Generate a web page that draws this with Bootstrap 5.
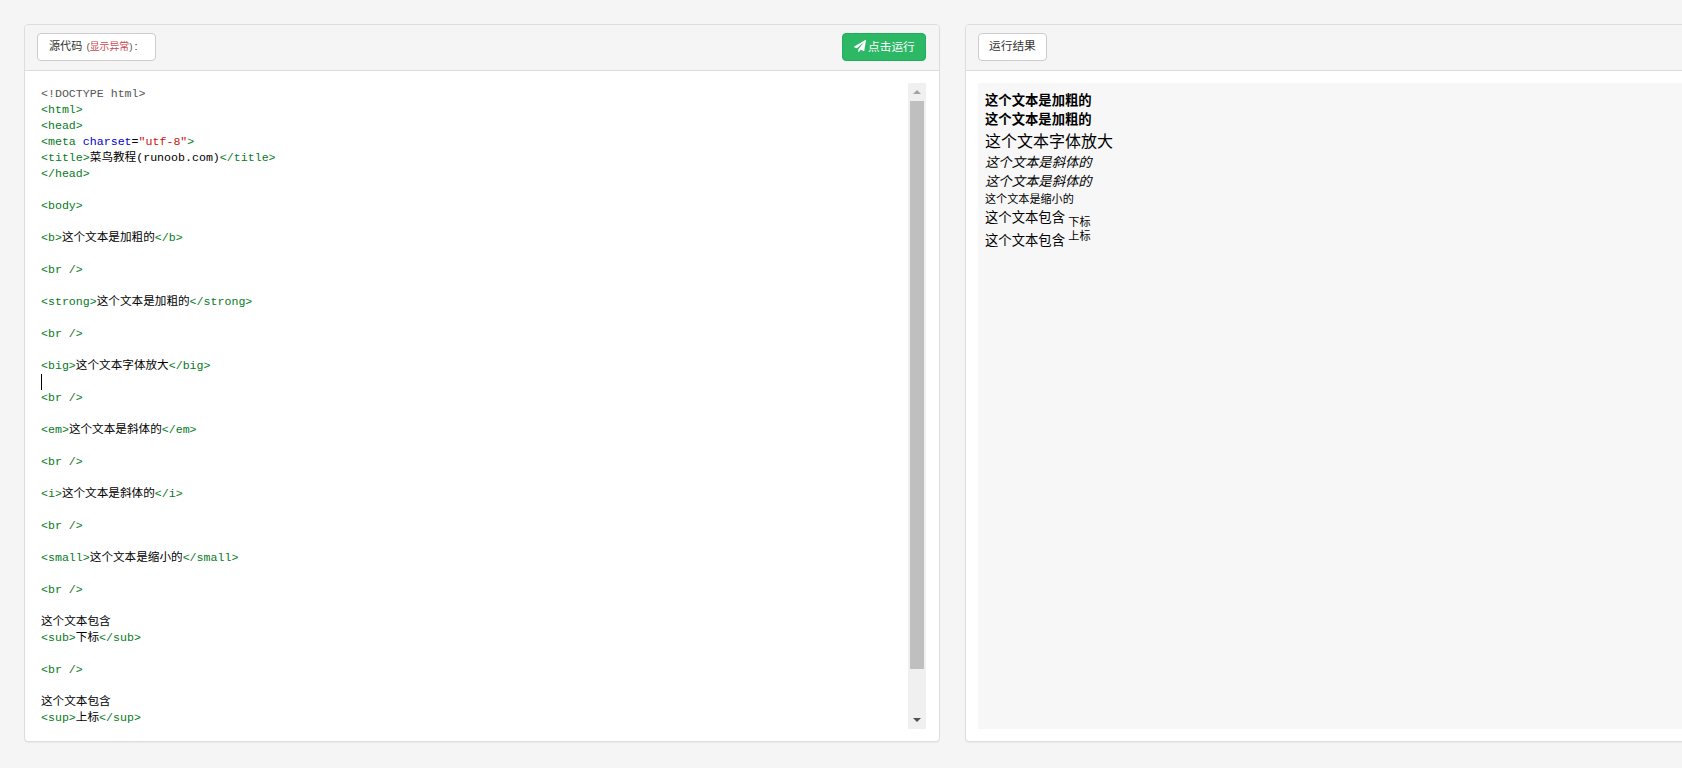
<!DOCTYPE html>
<html lang="zh-CN">
<head>
<meta charset="utf-8">
<title>菜鸟教程在线编辑器</title>
<link href="https://cdn.jsdelivr.net/npm/bootstrap@5.3.0/dist/css/bootstrap.min.css" rel="stylesheet">
<style>
html, body { height: 100%; overflow: hidden; }
body { background: #f5f5f5; font-family: "Liberation Sans", "Noto Sans CJK SC", sans-serif; font-size: 14px; color: #333; }
.pane-row { display: flex; gap: 25px; padding: 24px 0 0 24px; width: 1900px; }
.pane { flex: 0 0 916px; height: 718px; border: 1px solid #ddd; border-radius: 4px; box-shadow: 0 1px 1px rgba(0,0,0,.05); background: #fff; }
.pane-head { background: #f5f5f5; border-bottom: 1px solid #ddd; height: 46px; padding: 8px 13px 0 12px; border-radius: 3px 3px 0 0; }
.tag-btn { background: #fff; border: 1px solid #ccc; border-radius: 4px; font-size: 11.7px; line-height: 18px; padding: 3px 10px; color: #333; height: 28px; white-space: nowrap; }
.tag-wide { width: 119px; font-size: 11.1px; padding-left: 11px; }
.tag-btn .warn { color: #c9484f; font-size: 9.9px; }
.tag-btn .note { font-size: 9.9px; color: #555; margin-left: 1px; }
.tag-btn .colon { margin-left: 2px; }
.run-btn { background: #2db865; border: 1px solid #1fae5b; border-radius: 4px; color: #fff; font-size: 11.7px; line-height: 18px; padding: 3px 0 4px 11px; height: 28px; width: 84px; white-space: nowrap; text-align: left; }
.run-btn svg { width: 12px; height: 12px; fill: #fff; vertical-align: -1px; margin-right: 2px; }
.pane-body { padding: 12px 13px 12px 12px; display: flex; height: 670px; }
.code-area { flex: 1 1 auto; min-width: 0; padding: 3px 0 0 4px; }
.code-text { font-family: "Liberation Mono", "Noto Sans CJK SC", monospace; font-size: 11.62px; line-height: 16px; margin: 0; color: #000; overflow: hidden; }
.code-text .t { color: #067a1e; }
.code-text .m { color: #555; }
.code-text .a { color: #00c; }
.code-text .s { color: #c11; }
.caret-bar { display: inline-block; width: 0; height: 16px; margin-bottom: -1px; border-left: 1px solid #000; vertical-align: top; }
.fake-scroll { flex: 0 0 18px; background: #f0f0f0; display: flex; flex-direction: column; align-items: center; }
.arrow-zone { height: 18px; flex: 0 0 18px; display: flex; align-items: center; justify-content: center; }
.arrow-up { width: 0; height: 0; border: 4px solid transparent; border-top: 0; border-bottom: 4px solid #a3a3a3; }
.arrow-down { width: 0; height: 0; border: 4px solid transparent; border-bottom: 0; border-top: 4px solid #505050; }
.thumb { width: 14px; flex: 0 0 568px; background: #bfbfbf; }
.gap-fill { flex: 1 1 auto; }
.result-box { flex: 1 1 auto; background: #f7f7f7; padding: 7px; font-family: "Liberation Serif", "Noto Sans CJK SC", sans-serif; font-size: 13.33px; line-height: normal; color: #000; }
.result-box small { font-size: smaller; }
.result-box big { font-size: larger; }
.result-box b, .result-box strong { font-weight: bold; }
.result-box sub { font-size: smaller; vertical-align: sub; position: static; line-height: normal; }
.result-box sup { font-size: smaller; vertical-align: super; position: static; line-height: 15px; }
</style>
</head>
<body>
<div class="pane-row">
  <section class="pane">
    <div class="pane-head d-flex justify-content-between align-items-start">
      <div class="tag-btn tag-wide">源代码 <span class="note">(<span class="warn">显示异常</span>)</span><span class="colon">:</span></div>
      <button type="button" class="run-btn"><svg viewBox="0 0 1792 1792" aria-hidden="true"><path d="M1764 11q33 24 27 64l-256 1536q-5 29-32 45-14 8-31 8-11 0-24-5l-453-185-242 295q-18 23-49 23-13 0-22-4-19-7-30.5-23.5t-11.5-36.5v-349l864-1059-1069 925-395-162q-37-14-40-55-2-40 32-59l1664-960q15-9 32-9 20 0 36 11z"/></svg>点击运行</button>
    </div>
    <div class="pane-body">
      <div class="code-area">
<pre class="code-text"><span class="m">&lt;!DOCTYPE html&gt;</span>
<span class="t">&lt;html&gt;</span>
<span class="t">&lt;head&gt;</span>
<span class="t">&lt;meta</span> <span class="a">charset</span>=<span class="s">"utf-8"</span><span class="t">&gt;</span>
<span class="t">&lt;title&gt;</span>菜鸟教程(runoob.com)<span class="t">&lt;/title&gt;</span>
<span class="t">&lt;/head&gt;</span>

<span class="t">&lt;body&gt;</span>

<span class="t">&lt;b&gt;</span>这个文本是加粗的<span class="t">&lt;/b&gt;</span>

<span class="t">&lt;br /&gt;</span>

<span class="t">&lt;strong&gt;</span>这个文本是加粗的<span class="t">&lt;/strong&gt;</span>

<span class="t">&lt;br /&gt;</span>

<span class="t">&lt;big&gt;</span>这个文本字体放大<span class="t">&lt;/big&gt;</span>
<span class="caret-bar"></span>
<span class="t">&lt;br /&gt;</span>

<span class="t">&lt;em&gt;</span>这个文本是斜体的<span class="t">&lt;/em&gt;</span>

<span class="t">&lt;br /&gt;</span>

<span class="t">&lt;i&gt;</span>这个文本是斜体的<span class="t">&lt;/i&gt;</span>

<span class="t">&lt;br /&gt;</span>

<span class="t">&lt;small&gt;</span>这个文本是缩小的<span class="t">&lt;/small&gt;</span>

<span class="t">&lt;br /&gt;</span>

这个文本包含
<span class="t">&lt;sub&gt;</span>下标<span class="t">&lt;/sub&gt;</span>

<span class="t">&lt;br /&gt;</span>

这个文本包含
<span class="t">&lt;sup&gt;</span>上标<span class="t">&lt;/sup&gt;</span></pre>
      </div>
      <div class="fake-scroll">
        <div class="arrow-zone"><div class="arrow-up"></div></div>
        <div class="thumb"></div>
        <div class="gap-fill"></div>
        <div class="arrow-zone"><div class="arrow-down"></div></div>
      </div>
    </div>
  </section>
  <section class="pane">
    <div class="pane-head d-flex">
      <div class="tag-btn">运行结果</div>
    </div>
    <div class="pane-body">
      <div class="result-box">
        <b>这个文本是加粗的</b><br>
        <strong>这个文本是加粗的</strong><br>
        <big>这个文本字体放大</big><br>
        <em>这个文本是斜体的</em><br>
        <i>这个文本是斜体的</i><br>
        <small>这个文本是缩小的</small><br>
        这个文本包含 <sub>下标</sub><br>
        这个文本包含 <sup>上标</sup>
      </div>
    </div>
  </section>
</div>
<script src="https://cdn.jsdelivr.net/npm/bootstrap@5.3.0/dist/js/bootstrap.bundle.min.js"></script>
</body>
</html>
